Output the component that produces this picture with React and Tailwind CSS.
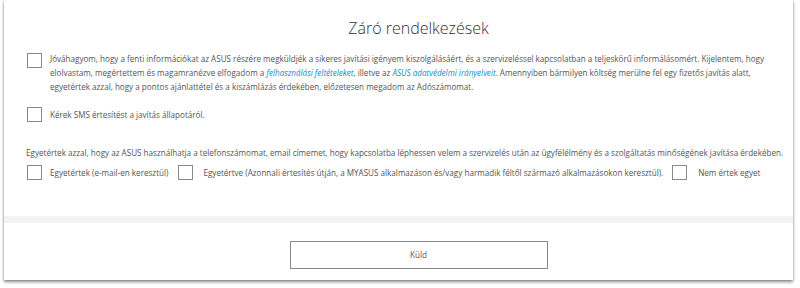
import React from "react";

function Box() {
  return <span className="block w-[15px] h-[15px] border border-[#8a8a8a] bg-white shrink-0" />;
}

export default function App() {
  const font = { fontFamily: '"Open Sans", "Noto Sans", sans-serif' };
  return (
    <div className="w-[800px] h-[288px] bg-white overflow-hidden" style={font}>
      <div className="ml-[4px] w-[789px] h-[280px] bg-white shadow-[0_2px_3px_rgba(0,0,0,0.45),0_0_2px_rgba(0,0,0,0.15)] flex flex-col">
        <div className="h-[216px] flex flex-col">
          <h1 className="text-center pl-[40px] text-[16px] font-light text-[#333] leading-[24px] mt-[16px]">Záró rendelkezések</h1>
          <div className="flex gap-[8px] pl-[23px] mt-[12px] text-[8.1px] leading-[14px] text-[#555]">
            <div className="pt-[1px]"><Box /></div>
            <p className="whitespace-nowrap">
              Jóváhagyom, hogy a fenti információkat az ASUS részére megküldjék a sikeres javítási igényem kiszolgálásáért, és a szervizeléssel kapcsolatban a teljeskörű informálásomért. Kijelentem, hogy
              <br />
              elolvastam, megértettem és magamranézve elfogadom a <i className="text-[#1a8bc6]">felhasználási feltételeket</i>, illetve az <i className="text-[#1a8bc6]">ASUS adatvédelmi irányelveit</i>. Amennyiben bármilyen költség merülne fel egy fizetős javítás alatt,
              <br />
              egyetértek azzal, hogy a pontos ajánlattétel és a kiszámlázás érdekében, előzetesen megadom az Adószámomat.
            </p>
          </div>
          <div className="flex items-center gap-[8px] pl-[23px] mt-[13px] text-[8.1px] leading-[14px] text-[#555]">
            <Box />
            <span>Kérek SMS értesítést a javítás állapotáról.</span>
          </div>
          <p className="pl-[22px] mt-[24px] text-[8.1px] leading-[14px] text-[#555] whitespace-nowrap">
            Egyetértek azzal, hogy az ASUS használhatja a telefonszámomat, email címemet, hogy kapcsolatba léphessen velem a szervizelés után az ügyfélélmény és a szolgáltatás minőségének javítása érdekében.
          </p>
          <div className="flex items-center pl-[23px] mt-[5px] text-[8.1px] leading-[14px] text-[#555] whitespace-nowrap">
            <Box />
            <span className="ml-[8px]">Egyetértek (e-mail-en keresztül)</span>
            <span className="ml-[10px]"><Box /></span>
            <span className="ml-[10px]">Egyetértve (Azonnali értesítés útján, a MYASUS alkalmazáson és/vagy harmadik féltől származó alkalmazásokon keresztül).</span>
            <span className="ml-[9px]"><Box /></span>
            <span className="ml-[11px]">Nem értek egyet</span>
          </div>
        </div>
        <div className="h-[7px] bg-[#f3f3f3]" />
        <div className="flex justify-center pl-[40px] pt-[18px]">
          <button className="w-[258px] h-[28px] border border-[#8a8a8a] bg-white text-[8.1px] text-[#555]">Küld</button>
        </div>
      </div>
    </div>
  );
}
